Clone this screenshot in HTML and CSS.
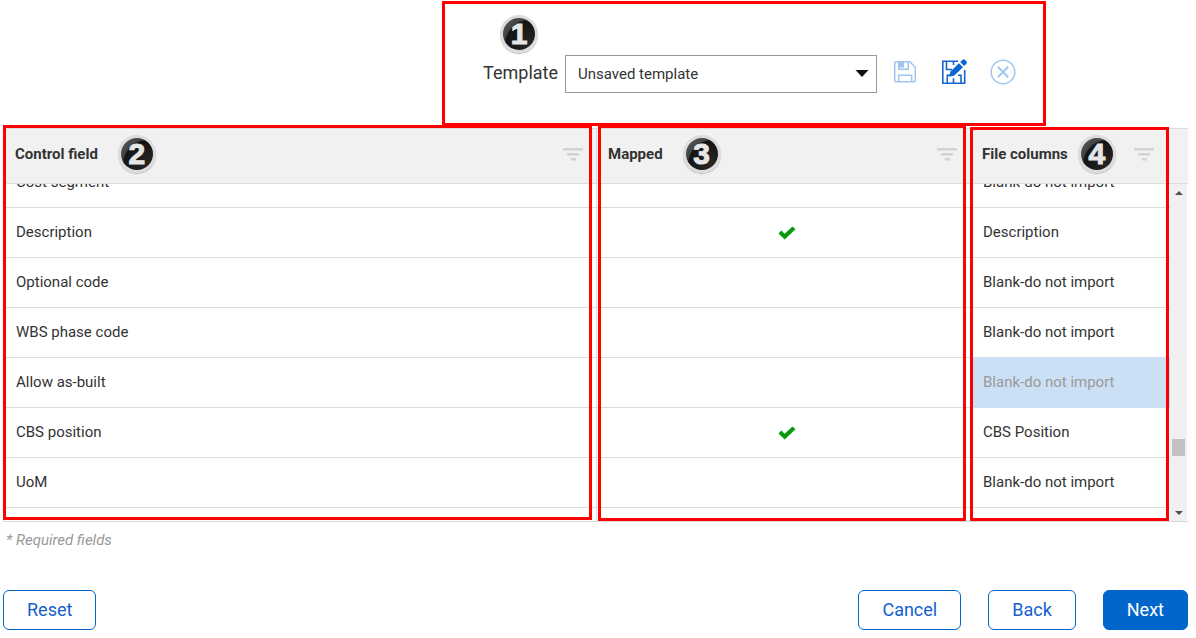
FILE: index.html
```html
<!DOCTYPE html>
<html lang="en">
  <head>
    <meta charset="UTF-8" />
    <meta name="viewport" content="width=device-width, initial-scale=1.0" />
    <title>Map fields</title>
    <link rel="stylesheet" href="styles.css">
  </head>
  <body>
    <svg class="sprite" aria-hidden="true">
      <symbol id="filter" viewBox="0 0 20 13">
        <path d="M0 0h20v2.5H0zM4 5h12v2.5H4zM8 10h5v2.5H8z" fill="#d3d3d3" />
      </symbol>
      <symbol id="check" viewBox="0 0 18 14">
        <path d="M0.5 7.4 3.3 4.5 6.7 7.8 14.5 0.4 17.5 3.2 6.7 13.6z" fill="#069a0c" />
      </symbol>
    </svg>

    <!-- Template -->
    <div class="template-bar">
      <span class="badge badge-top">1</span>
      <label for="template">Template</label>
      <div class="select-wrap">
        <select id="template" name="template">
          <option>Unsaved template</option>
        </select>
        <svg class="caret" width="14" height="7" viewBox="0 0 14 7"><path d="M0.5 0h13L7 7z" fill="#111" /></svg>
      </div>
      <div class="template-actions">
        <button type="button" class="icon-btn" aria-label="Save" disabled>
          <svg width="26" height="26" viewBox="0 0 26 26" fill="none" stroke="#9fc5ee" stroke-width="1.5">
            <path d="M3.7 2.7h14.1l5.5 5.5v13.5a1 1 0 0 1-1 1H3.7a1 1 0 0 1-1-1V3.7a1 1 0 0 1 1-1z" />
            <path d="M6.7 2.7v7.6h9.6V2.7" />
            <path d="M6.7 22.7v-6.5h13v6.5" />
            <path d="M7 3h5v5.5H7z" fill="#9fc5ee" stroke="none" />
          </svg>
        </button>
        <button type="button" class="icon-btn" aria-label="Save as">
          <svg width="28" height="28" viewBox="0 0 28 28" fill="none" stroke="#1565d0" stroke-width="1.6">
            <path d="M18 3.3H2.8v21.9h21.9V12" />
            <path d="M6.5 3.3v8.2h5.5" />
            <path d="M7.3 25.2v-8h3M18 17.2h3v8M13.5 25.2v-5" />
            <path d="M13.5 3.5v3.5" />
            <path d="M9 18.8 10.5 13.5 19 5.2 23 9.2 14.4 17.4z" fill="#0a66cf" stroke="none" />
            <path d="M20.2 4.1 22.4 2c.9-.9 1.9-.9 2.7 0l1.2 1.2c.8.8.8 1.8 0 2.6l-2.2 2.2z" fill="#0a66cf" stroke="none" />
          </svg>
        </button>
        <button type="button" class="icon-btn" aria-label="Delete" disabled>
          <svg width="26" height="26" viewBox="0 0 26 26" fill="none" stroke="#a3c6ef" stroke-width="1.5">
            <circle cx="13" cy="13" r="11.8" />
            <path d="M7.8 7.8l10.4 10.4M18.2 7.8 7.8 18.2" stroke-width="2" />
          </svg>
        </button>
      </div>
    </div>

    <!-- Mapping grid -->
    <div class="grid">
      <div class="grid-head">
        <table>
          <colgroup>
            <col />
            <col class="col-mapped" />
            <col class="col-file" />
          </colgroup>
          <thead>
            <tr>
              <th>
                <div class="th-content">
                  Control field <span class="badge">2</span>
                  <svg class="filter"><use href="#filter" /></svg>
                </div>
              </th>
              <th>
                <div class="th-content">
                  Mapped <span class="badge">3</span>
                  <svg class="filter"><use href="#filter" /></svg>
                </div>
              </th>
              <th class="file-head">
                <div class="th-content">
                  File columns <span class="badge">4</span>
                  <svg class="filter"><use href="#filter" /></svg>
                </div>
              </th>
            </tr>
          </thead>
        </table>
      </div>
      <div class="grid-body">
        <table class="scrolled">
          <colgroup>
            <col />
            <col class="col-mapped" />
            <col class="col-file" />
          </colgroup>
          <tbody>
            <tr>
              <td>Cost segment</td>
              <td class="mapped"></td>
              <td>Blank-do not import</td>
            </tr>
            <tr>
              <td>Description</td>
              <td class="mapped"><svg class="check"><use href="#check" /></svg></td>
              <td>Description</td>
            </tr>
            <tr>
              <td>Optional code</td>
              <td class="mapped"></td>
              <td>Blank-do not import</td>
            </tr>
            <tr>
              <td>WBS phase code</td>
              <td class="mapped"></td>
              <td>Blank-do not import</td>
            </tr>
            <tr>
              <td>Allow as-built</td>
              <td class="mapped"></td>
              <td class="selected">Blank-do not import</td>
            </tr>
            <tr>
              <td>CBS position</td>
              <td class="mapped"><svg class="check"><use href="#check" /></svg></td>
              <td>CBS Position</td>
            </tr>
            <tr>
              <td>UoM</td>
              <td class="mapped"></td>
              <td>Blank-do not import</td>
            </tr>
            <tr>
              <td></td>
              <td class="mapped"></td>
              <td></td>
            </tr>
          </tbody>
        </table>
        <div class="scrollbar">
          <svg width="8" height="4" viewBox="0 0 8 4"><path d="M0 4 4 0l4 4z" fill="#505050" /></svg>
          <div class="thumb"></div>
          <svg width="8" height="4" viewBox="0 0 8 4"><path d="M0 0h8L4 4z" fill="#505050" /></svg>
        </div>
      </div>

      <!-- Callout frames over the columns -->
      <div class="frames">
        <div class="frame frame-control"></div>
        <div class="frame frame-mapped"></div>
        <div class="frame frame-file"></div>
      </div>
    </div>

    <p class="note">* Required fields</p>

    <div class="footer">
      <button type="button" class="btn btn-reset">Reset</button>
      <button type="button" class="btn">Cancel</button>
      <button type="button" class="btn">Back</button>
      <button type="button" class="btn btn-primary">Next</button>
    </div>
  </body>
</html>
```
FILE: styles.css
```css
* {
  box-sizing: border-box;
}
body {
  margin: 0;
  padding: 1px 8px 8px 3px;
  background-color: #fff;
  color: #333;
  font-family: Roboto, Arial, sans-serif;
  font-size: 15px;
  line-height: 20px;
}
.sprite {
  position: absolute;
  width: 0;
  height: 0;
}

/* Template bar */
.template-bar {
  position: relative;
  display: flex;
  align-items: center;
  width: fit-content;
  margin: 0 142px 0 auto;
  padding: 51px 27px 30px 38px;
  border: 3px solid #fe0000;
}
.template-bar label {
  margin-right: 7px;
  padding-bottom: 2px;
  font-size: 18px;
}
.select-wrap {
  position: relative;
}
select {
  appearance: none;
  display: block;
  width: 312px;
  height: 38px;
  padding: 0 12px;
  border: 1px solid #999;
  border-radius: 0;
  background-color: #fff;
  color: #333;
  font: inherit;
}
.caret {
  position: absolute;
  top: 15px;
  right: 8px;
  pointer-events: none;
}
.template-actions {
  display: flex;
  align-items: center;
  gap: 22px;
  margin: 0 0 4px 15px;
}
.icon-btn {
  display: block;
  padding: 0;
  border: 0;
  background: none;
}
.icon-btn svg {
  display: block;
}

/* Numbered callouts */
.badge {
  display: flex;
  flex: none;
  align-items: center;
  justify-content: center;
  width: 38px;
  height: 38px;
  border: 3px solid #dcdcdc;
  border-radius: 50%;
  background: radial-gradient(circle at 85% 85%, #262626 0, #141414 64%, #454545 68%, #5a5a5a 100%);
  box-shadow: 0 1px 1px #bbb;
  color: #e6e6e6;
  font-family: "Liberation Sans", Arial, sans-serif;
  font-size: 30px;
  font-weight: bold;
  line-height: 32px;
  -webkit-text-stroke: 1px #e6e6e6;
}
.badge-top {
  position: absolute;
  top: 11px;
  left: 55px;
}

/* Grid */
.grid {
  position: relative;
  margin-top: 2px;
  border-bottom: 1px solid #d8d8d8;
}
.grid-head {
  padding-right: 18px;
  border-top: 1px solid #dcdcdc;
  border-bottom: 1px solid #dcdcdc;
  background-color: #f1f1f1;
}
.grid-body {
  display: flex;
  height: 337px;
  padding-right: 1px;
  overflow: hidden;
}
table {
  width: 100%;
  table-layout: fixed;
  border-collapse: separate;
  border-spacing: 0;
}
.scrolled {
  flex: 1;
  margin-top: -26px;
}
.col-mapped {
  width: 374px;
}
.col-file {
  width: 200px;
}
th,
td {
  padding: 0 13px 2px 12px;
  border-left: 1px solid #dcdcdc;
  text-align: left;
}
th {
  height: 54px;
  padding: 0 13px 4px 11px;
}
td {
  height: 50px;
  border-bottom: 1px solid #dcdcdc;
}
.th-content {
  display: flex;
  align-items: center;
  gap: 20px;
  height: 50px;
}
.file-head {
  padding-right: 16px;
}
.file-head .th-content {
  gap: 10px;
}
.filter {
  width: 20px;
  height: 13px;
  margin-left: auto;
}
.mapped {
  padding: 0 0 2px 6px;
  text-align: center;
}
.check {
  width: 18px;
  height: 14px;
  vertical-align: middle;
}
.selected {
  border-color: #cce0f5;
  background-color: #cce0f5;
  box-shadow: 0 -1px #cce0f5;
  color: #999;
}
.scrollbar {
  display: flex;
  flex-direction: column;
  align-items: center;
  width: 17px;
  padding: 7px 0 6px;
  background-color: #f0f0f0;
}
.thumb {
  width: 13px;
  height: 17px;
  margin: auto 0 55px;
  background-color: #c1c1c1;
}

/* Frames */
.frames {
  position: absolute;
  inset: -3px 0 0;
  display: grid;
  grid-template-columns: 1fr 374px 200px 18px;
  pointer-events: none;
}
.frame {
  border: 3px solid #fe0000;
}
.frame-control {
  margin: 0 4px 1px 0;
}
.frame-mapped {
  margin: 0 4px 0 2px;
}
.frame-file {
  margin: 2px 1px 0 0;
}

.note {
  margin: 8px 3px 40px;
  color: #999;
  font-style: italic;
}

/* Footer buttons */
.footer {
  display: flex;
  gap: 27px;
}
.btn {
  height: 40px;
  padding: 0 23px 2px;
  border: 1px solid #0066cc;
  border-radius: 6px;
  background-color: #fff;
  color: #1560cc;
  font-family: inherit;
  font-size: 18px;
}
.btn-reset {
  margin-right: auto;
}
.btn-primary {
  background-color: #0066cc;
  color: #fff;
}
```
